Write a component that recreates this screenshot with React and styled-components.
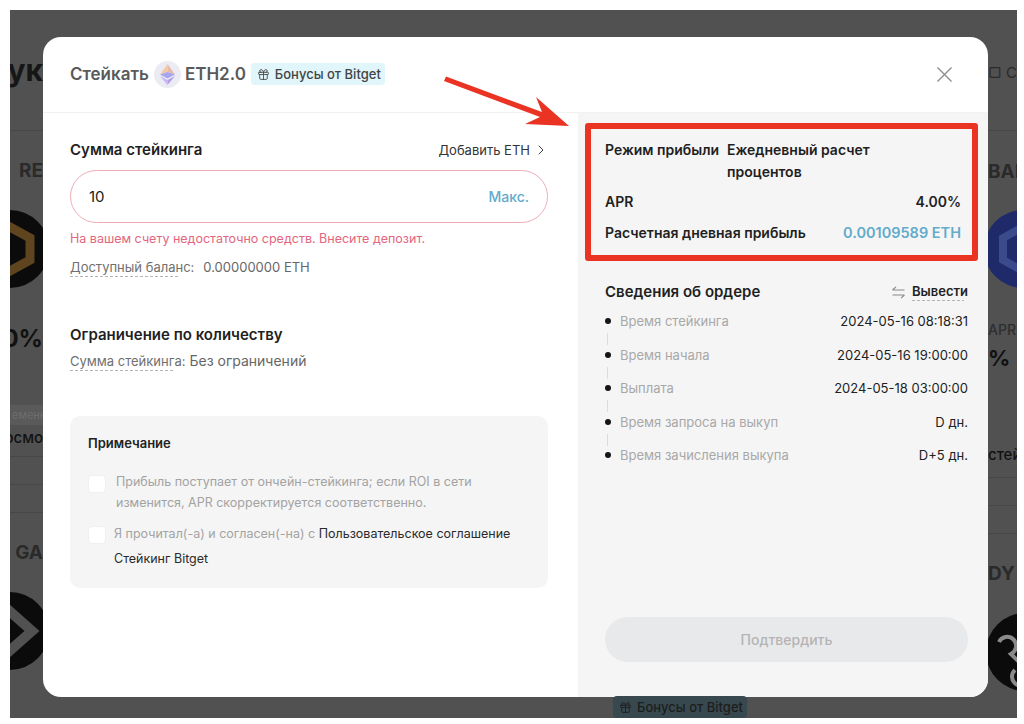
import React from "react";
import styled, { createGlobalStyle } from "styled-components";
import { ChevronRight, Gift } from "lucide-react";

const Global = createGlobalStyle`
  html, body { margin: 0; padding: 0; background: #fff; }
  body { font-family: Inter, "Noto Sans", sans-serif; }
  * { box-sizing: border-box; }
`;

const Page = styled.div`
  position: relative;
  width: 1024px;
  height: 724px;
  padding: 10px 7px 6px 10px;
  overflow: hidden;
  background: #fff;
`;
const Backdrop = styled.div`
  display: flex;
  width: 100%;
  height: 100%;
  background: #515151;
  overflow: hidden;
`;
const Sliver = styled.div`
  flex: none;
  width: ${(p) => p.$width}px;
  height: 100%;
  padding-top: 45px;
  display: flex;
  flex-direction: column;
  align-items: ${(p) => (p.$side === "left" ? "flex-end" : "flex-start")};
  overflow: hidden;
`;
const BgText = styled.div`
  flex: none;
  height: ${(p) => p.$h}px;
  margin-top: ${(p) => p.$mt || 0}px;
  line-height: ${(p) => p.$h}px;
  font-size: ${(p) => p.$size}px;
  font-weight: ${(p) => p.$weight || 700};
  color: ${(p) => p.$color};
  white-space: nowrap;
  display: flex;
  align-self: ${(p) => p.$align || "auto"};
`;
const BgRule = styled.div`
  flex: none;
  align-self: stretch;
  height: 1px;
  margin-top: ${(p) => p.$mt || 0}px;
  background: #474747;
`;
const BgLogo = styled.svg`
  flex: none;
  width: 80px;
  height: 80px;
  margin-top: ${(p) => p.$mt || 0}px;
  margin-left: ${(p) => p.$ml || 0}px;
  margin-right: ${(p) => p.$mr || 0}px;
`;
const BgChip = styled.div`
  flex: none;
  width: 100%;
  height: 20px;
  margin-top: ${(p) => p.$mt}px;
  padding-left: 2px;
  background: #5a5a5a;
  color: #6e6e6e;
  font-size: 11px;
  line-height: 20px;
  white-space: nowrap;
`;
const Center = styled.div`
  flex: 1;
  display: flex;
  flex-direction: column;
  padding-top: 27px;
  min-width: 0;
`;
const Modal = styled.div`
  flex: none;
  height: 660px;
  display: flex;
  flex-direction: column;
  background: #fff;
  border-radius: 18px;
  overflow: hidden;
`;
const Header = styled.header`
  flex: none;
  height: 76px;
  display: flex;
  align-items: center;
  padding: 0 35px 1px 27px;
  border-bottom: 1px solid #f2f2f2;
`;
const Title = styled.span`
  font-size: 17px;
  font-weight: 600;
  color: #5a5a5a;
`;
const CoinBadge = styled.span`
  flex: none;
  width: 27px;
  height: 27px;
  margin: 0 4px 0 5px;
  border-radius: 50%;
  background: #ebebf3;
  display: flex;
  align-items: center;
  justify-content: center;
`;
const Bonus = styled.span`
  display: inline-flex;
  align-items: center;
  gap: 5px;
  height: 22px;
  padding: 0 4px 0 6px;
  border-radius: 4px;
  background: ${(p) => p.$bg};
  color: ${(p) => p.$color};
  font-size: 13px;
  font-weight: 500;
  white-space: nowrap;
`;
const BonusWrap = styled.span`
  margin-left: 5px;
  display: flex;
`;
const Close = styled.svg`
  margin-left: auto;
  width: 17px;
  height: 17px;
`;
const Body = styled.div`
  flex: 1;
  display: flex;
  min-height: 0;
`;
const LeftPane = styled.section`
  flex: none;
  width: 535px;
  padding: 26px 30px 0 27px;
  display: flex;
  flex-direction: column;
`;
const Row = styled.div`
  display: flex;
  align-items: ${(p) => p.$align || "center"};
  justify-content: space-between;
  margin-top: ${(p) => p.$mt || 0}px;
`;
const Heading = styled.h3`
  margin: ${(p) => p.$mt || 0}px 0 0;
  font-size: 15px;
  line-height: 22px;
  font-weight: 600;
  color: #1f1f1f;
`;
const AddLink = styled.span`
  display: flex;
  align-items: center;
  gap: 3px;
  margin-right: -1px;
  font-size: 13px;
  color: #333;
`;
const AmountField = styled.div`
  height: 53px;
  margin-top: 9px;
  padding: 0 18px;
  display: flex;
  align-items: center;
  justify-content: space-between;
  border: 1px solid #efacb8;
  border-radius: 27px;
`;
const AmountValue = styled.span`
  font-size: 15px;
  color: #222;
`;
const MaxBtn = styled.span`
  font-size: 14px;
  font-weight: 500;
  color: #62abcb;
`;
const ErrorText = styled.div`
  margin-top: 7px;
  font-size: 12.5px;
  line-height: 18px;
  color: #e4667e;
`;
const InfoLine = styled.div`
  display: flex;
  align-items: baseline;
  margin-top: ${(p) => p.$mt}px;
  font-size: ${(p) => p.$size}px;
  line-height: 18px;
  color: #666;
  white-space: nowrap;
`;
const DashedLabel = styled.span`
  display: inline-block;
  padding-bottom: 1px;
  font-size: 13px;
  color: #707070;
  background: repeating-linear-gradient(90deg, #b5b5b5 0 3px, transparent 3px 5px) left bottom / ${(p) => p.$w}px 1px no-repeat;
`;
const Value = styled.span`
  margin-left: ${(p) => p.$ml}px;
`;
const NoteBox = styled.div`
  margin-top: 45px;
  height: 172px;
  padding: 18px 18px 0;
  border-radius: 10px;
  background: #f5f5f5;
`;
const NoteTitle = styled.div`
  font-size: 13px;
  line-height: 18px;
  font-weight: 600;
  color: #222;
`;
const CheckRow = styled.div`
  display: flex;
  align-items: flex-start;
  margin-top: ${(p) => p.$mt}px;
`;
const Check = styled.span`
  flex: none;
  width: 18px;
  height: 18px;
  margin-top: ${(p) => p.$mt || 0}px;
  margin-right: ${(p) => p.$mr}px;
  border-radius: 4px;
  background: #fff;
  border: 1px solid #f0f0f0;
`;
const NoteText = styled.p`
  margin: 0;
  font-size: 12.5px;
  line-height: ${(p) => p.$lh}px;
  color: #a3a3a3;
`;
const Strong = styled.span`
  color: #2a2a2a;
`;
const RightPane = styled.aside`
  flex: 1;
  padding: 10px 10px 0 7px;
  display: flex;
  flex-direction: column;
  background: #f5f5f5;
`;
const Annotated = styled.div`
  height: 138px;
  padding: 10px 11px 0 14px;
  border: 6px solid #ea3323;
  border-radius: 3px;
`;
const SummaryRow = styled.div`
  display: flex;
  justify-content: space-between;
  margin-top: ${(p) => p.$mt || 0}px;
  font-size: 14px;
  line-height: 22px;
  font-weight: 600;
  color: #1f1f1f;
`;
const ModeLabel = styled.span`
  flex: none;
  width: 122px;
`;
const ModeValue = styled.span`
  flex: 1;
  max-width: 180px;
  margin-right: auto;
`;
const Accent = styled.span`
  color: #62abcb;
  font-size: 14.5px;
`;
const Details = styled.div`
  flex: 1;
  padding: 20px 10px 35px 20px;
  display: flex;
  flex-direction: column;
`;
const WithdrawWrap = styled.span`
  display: flex;
  align-items: center;
  gap: 7px;
`;
const Withdraw = styled.span`
  padding-bottom: 2px;
  font-size: 13px;
  line-height: 16px;
  font-weight: 600;
  color: #222;
  background: repeating-linear-gradient(90deg, #b5b5b5 0 3px, transparent 3px 5px) left bottom / 52px 1px no-repeat;
`;
const Timeline = styled.ol`
  list-style: none;
  margin: 9px 0 0;
  padding: 0;
  display: flex;
  flex-direction: column;
  gap: 15.5px;
`;
const Step = styled.li`
  position: relative;
  height: 18px;
  padding-left: 15px;
  display: flex;
  justify-content: space-between;
  font-size: 13px;
  line-height: 18px;
  &::before {
    content: "";
    position: absolute;
    left: 0;
    top: 6px;
    width: 6px;
    height: 6px;
    border-radius: 50%;
    background: #151515;
  }
  &:not(:last-child)::after {
    content: "";
    position: absolute;
    left: 2px;
    top: 21px;
    width: 1px;
    height: 12px;
    background: #dcdcdc;
  }
`;
const StepLabel = styled.span`
  color: #a8a8a8;
`;
const StepValue = styled.span`
  color: #222;
`;
const Submit = styled.button`
  margin-top: auto;
  height: 45px;
  border: 0;
  border-radius: 23px;
  background: #e8e9eb;
  color: #b4b4b4;
  font-family: inherit;
  font-size: 14px;
  font-weight: 500;
`;
const BottomStrip = styled.div`
  flex: 1;
  display: flex;
  align-items: flex-end;
  padding-left: 570px;
  min-height: 0;
`;
const Arrow = styled.svg`
  position: absolute;
  left: 0;
  top: 0;
  width: 1024px;
  height: 724px;
  pointer-events: none;
`;

const EthIcon = () => (
  <svg width="15" height="21" viewBox="0 0 15 21">
    <path d="M7.5 0L0 10.5 7.5 8z" fill="#f3c9a8" />
    <path d="M7.5 0L15 10.5 7.5 8z" fill="#e8b8a8" />
    <path d="M0 10.5L7.5 8 15 10.5 7.5 14.5z" fill="#a6a6f0" />
    <path d="M0 12L7.5 16 7.5 21z" fill="#c9b6ee" />
    <path d="M15 12L7.5 16 7.5 21z" fill="#ad9fe8" />
  </svg>
);

export default function App() {
  return (
    <Page>
      <Global />
      <Backdrop>
        <Sliver $width={33} $side="left">
          <BgText $h={30} $size={30} $color="#161616" $mt={0}>ук</BgText>
          <BgRule $mt={45} />
          <BgText $h={24} $mt={28} $size={19} $color="#2a2a2a">RE</BgText>
          <BgLogo viewBox="0 0 80 80" $mt={26} $mr={-7}>
            <circle cx="40" cy="40" r="39" fill="#0b0b0b" />
            <path d="M40 18L60 29V51L40 62L20 51V29Z" fill="none" stroke="#5f4420" strokeWidth="9" />
          </BgLogo>
          <BgText $h={28} $mt={36} $size={24} $color="#111">0%</BgText>
          <BgChip $mt={52}>еменн</BgChip>
          <BgText $h={18} $mt={4} $size={15} $weight={500} $color="#111">осмо</BgText>
          <BgRule $mt={9} />
          <BgRule $mt={27} />
          <BgRule $mt={27} />
          <BgText $h={24} $mt={28} $size={19} $color="#2a2a2a">GA</BgText>
          <BgLogo viewBox="0 0 80 80" $mt={26} $mr={-7}>
            <circle cx="40" cy="40" r="39" fill="#0b0b0b" />
            <path d="M35 16L62 40L35 64" fill="none" stroke="#515151" strokeWidth="10" />
            <path d="M20 28L34 40L20 52" fill="none" stroke="#515151" strokeWidth="8" />
          </BgLogo>
        </Sliver>
        <Center>
          <Modal>
            <Header>
              <Title>Стейкать</Title>
              <CoinBadge><EthIcon /></CoinBadge>
              <Title>ETH2.0</Title>
              <BonusWrap>
                <Bonus $bg="#e0f6fb" $color="#444">
                  <Gift size={13} strokeWidth={1.6} />
                  Бонусы от Bitget
                </Bonus>
              </BonusWrap>
              <Close viewBox="0 0 17 17">
                <path d="M1.5 1.5L15.5 15.5M15.5 1.5L1.5 15.5" stroke="#8a8a8a" strokeWidth="1.3" fill="none" />
              </Close>
            </Header>
            <Body>
              <LeftPane>
                <Row>
                  <Heading>Сумма стейкинга</Heading>
                  <AddLink>Добавить ETH <ChevronRight size={16} strokeWidth={1.4} /></AddLink>
                </Row>
                <AmountField>
                  <AmountValue>10</AmountValue>
                  <MaxBtn>Макс.</MaxBtn>
                </AmountField>
                <ErrorText>На вашем счету недостаточно средств. Внесите депозит.</ErrorText>
                <InfoLine $mt={10} $size={13}>
                  <DashedLabel $w={110}>Доступный баланс:</DashedLabel>
                  <Value $ml={9}>0.00000000 ETH</Value>
                </InfoLine>
                <Heading $mt={47}>Ограничение по количеству</Heading>
                <InfoLine $mt={6} $size={14}>
                  <DashedLabel $w={104}>Сумма стейкинга:</DashedLabel>
                  <Value $ml={4}>Без ограничений</Value>
                </InfoLine>
                <NoteBox>
                  <NoteTitle>Примечание</NoteTitle>
                  <CheckRow $mt={19}>
                    <Check $mt={4} $mr={10} />
                    <NoteText $lh={21}>Прибыль поступает от ончейн-стейкинга; если ROI в сети изменится, APR скорректируется соответственно.</NoteText>
                  </CheckRow>
                  <CheckRow $mt={8}>
                    <Check $mt={5} $mr={8} />
                    <NoteText $lh={25}>Я прочитал(-а) и согласен(-на) с <Strong>Пользовательское соглашение Стейкинг Bitget</Strong></NoteText>
                  </CheckRow>
                </NoteBox>
              </LeftPane>
              <RightPane>
                <Annotated>
                  <SummaryRow>
                    <ModeLabel>Режим прибыли</ModeLabel>
                    <ModeValue>Ежедневный расчет процентов</ModeValue>
                  </SummaryRow>
                  <SummaryRow $mt={8}>
                    <span>APR</span>
                    <span>4.00%</span>
                  </SummaryRow>
                  <SummaryRow $mt={9}>
                    <span>Расчетная дневная прибыль</span>
                    <Accent>0.00109589 ETH</Accent>
                  </SummaryRow>
                </Annotated>
                <Details>
                  <Row>
                    <Heading>Сведения об ордере</Heading>
                    <WithdrawWrap>
                      <svg width="13" height="13" viewBox="0 0 13 13">
                        <path d="M0.5 4H12.5M0.5 4L4 0.8M12.5 9H0.5M12.5 9L9 12.2" stroke="#8a8a8a" strokeWidth="1.1" fill="none" />
                      </svg>
                      <Withdraw>Вывести</Withdraw>
                    </WithdrawWrap>
                  </Row>
                  <Timeline>
                    <Step><StepLabel>Время стейкинга</StepLabel><StepValue>2024-05-16 08:18:31</StepValue></Step>
                    <Step><StepLabel>Время начала</StepLabel><StepValue>2024-05-16 19:00:00</StepValue></Step>
                    <Step><StepLabel>Выплата</StepLabel><StepValue>2024-05-18 03:00:00</StepValue></Step>
                    <Step><StepLabel>Время запроса на выкуп</StepLabel><StepValue>D дн.</StepValue></Step>
                    <Step><StepLabel>Время зачисления выкупа</StepLabel><StepValue>D+5 дн.</StepValue></Step>
                  </Timeline>
                  <Submit disabled>Подтвердить</Submit>
                </Details>
              </RightPane>
            </Body>
          </Modal>
          <BottomStrip>
            <Bonus $bg="#37494e" $color="#1d1d1d">
              <Gift size={13} strokeWidth={1.6} />
              Бонусы от Bitget
            </Bonus>
          </BottomStrip>
        </Center>
        <Sliver $width={29} $side="right">
          <BgText $h={18} $mt={9} $size={15} $weight={400} $color="#2a2a2a">▢ С</BgText>
          <BgRule $mt={48} />
          <BgText $h={24} $mt={29} $size={19} $color="#2a2a2a">BAI</BgText>
          <BgLogo viewBox="0 0 80 80" $mt={25} $ml={-5}>
            <circle cx="40" cy="40" r="39" fill="#1f2a6b" />
            <path d="M40 18L60 29V51L40 62L20 51V29Z" fill="none" stroke="#3a4a8a" strokeWidth="8" />
          </BgLogo>
          <BgText $h={18} $mt={32} $size={14} $weight={500} $color="#2e2e2e">APR</BgText>
          <BgText $h={28} $mt={5} $size={22} $color="#111">% ~</BgText>
          <BgText $h={18} $mt={74} $size={15} $weight={500} $color="#111">стей</BgText>
          <BgRule $mt={13} />
          <BgRule $mt={27} />
          <BgRule $mt={27} />
          <BgText $h={24} $mt={28} $size={19} $color="#2a2a2a">DY</BgText>
          <BgLogo viewBox="0 0 80 80" $mt={26} $ml={-3}>
            <circle cx="40" cy="40" r="39" fill="#0b0b0b" />
            <path d="M14 30a9 9 0 1 1 12 12l16 16a9 9 0 1 1-12 0" fill="none" stroke="#8a8a8a" strokeWidth="4" />
          </BgLogo>
        </Sliver>
      </Backdrop>
      <Arrow viewBox="0 0 1024 724">
        <path d="M446 76.5L542 112L536 97L569 126L525 124L540 117L444 81Z" fill="#ea3323" />
      </Arrow>
    </Page>
  );
}
